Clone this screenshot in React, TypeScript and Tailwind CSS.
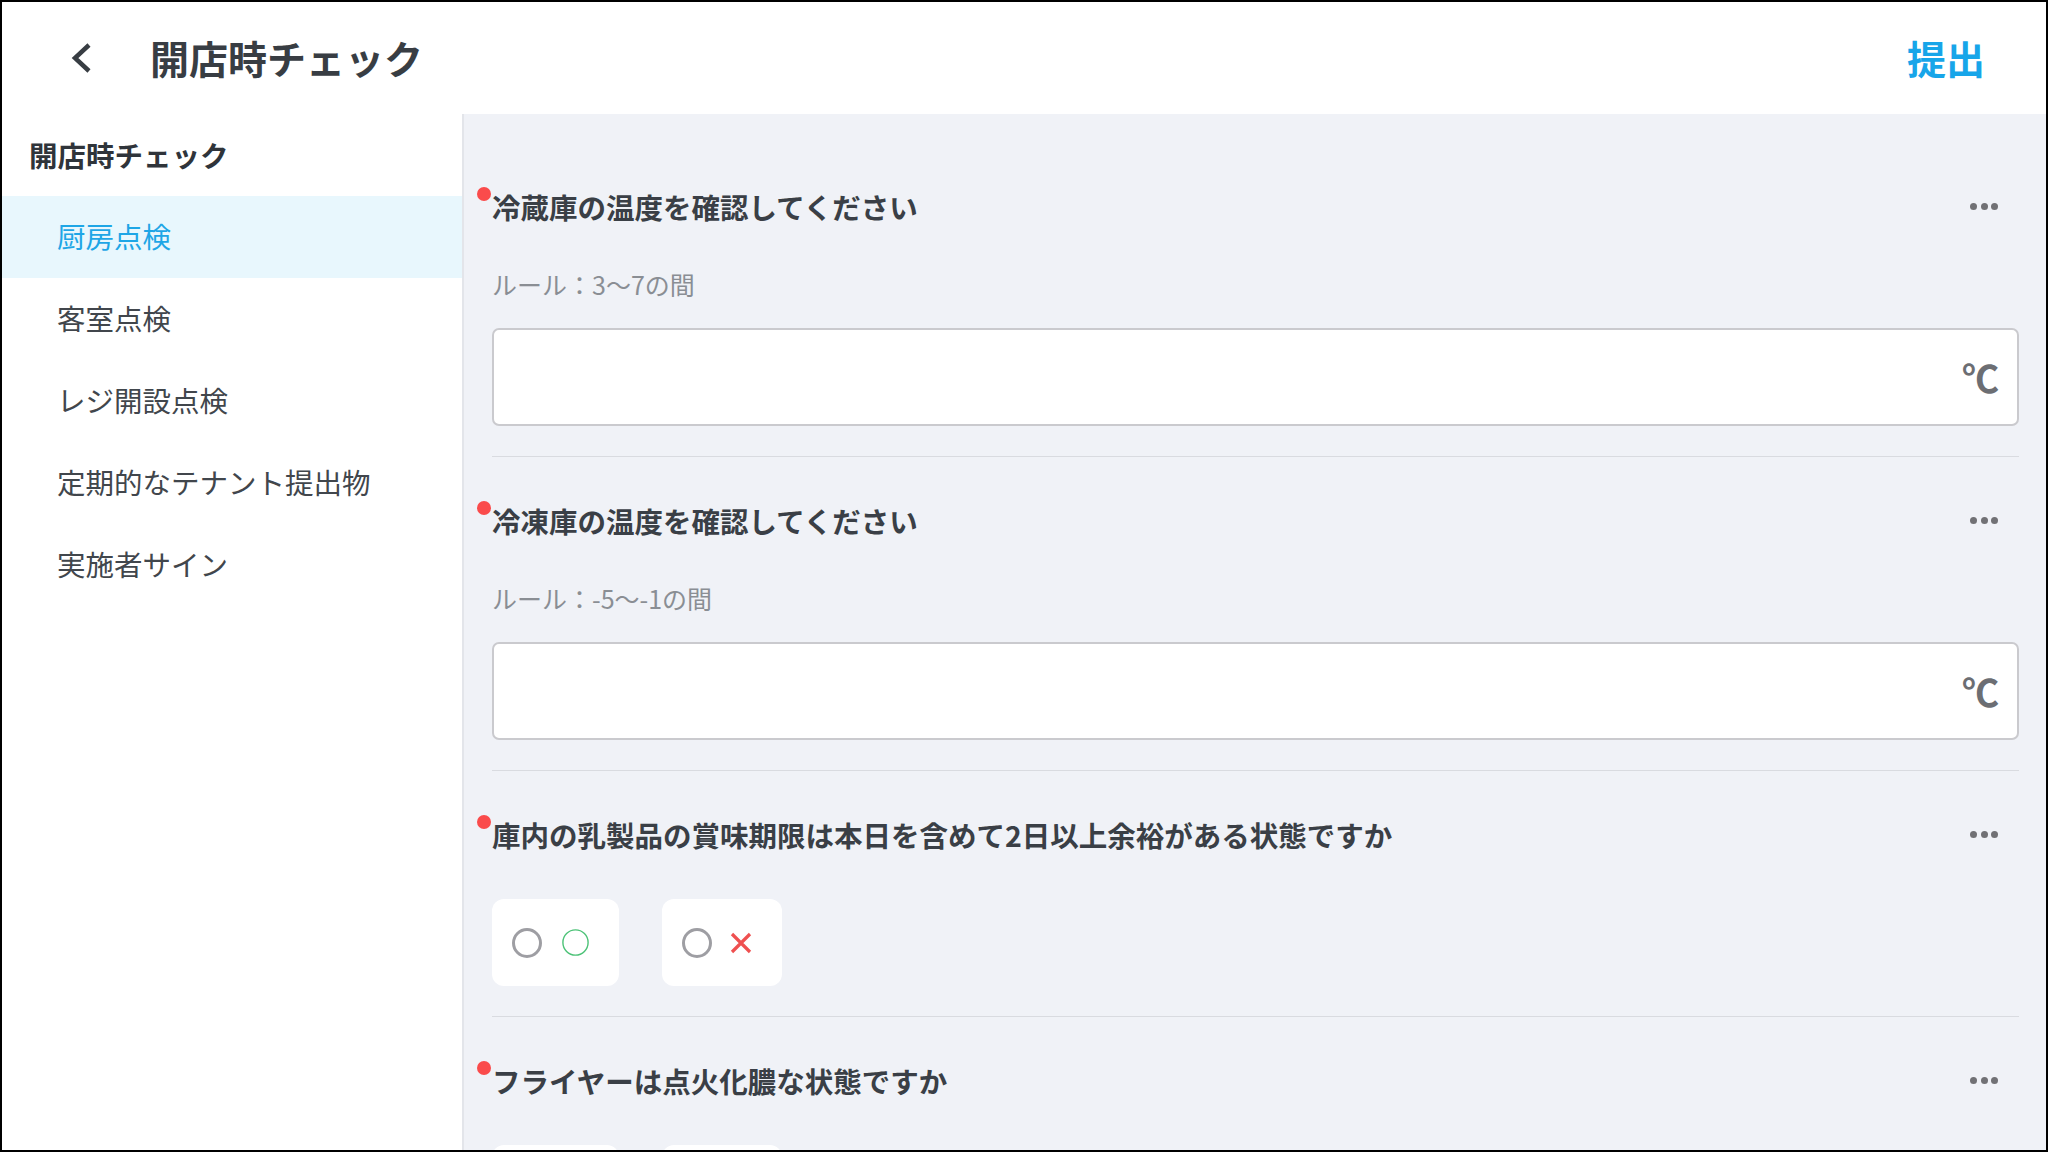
import React from "react";

type Q =
  | { kind: "temp"; title: string; rule: string }
  | { kind: "yesno"; title: string };

const questions: Q[] = [
  { kind: "temp", title: "冷蔵庫の温度を確認してください", rule: "ルール：3〜7の間" },
  { kind: "temp", title: "冷凍庫の温度を確認してください", rule: "ルール：-5〜-1の間" },
  { kind: "yesno", title: "庫内の乳製品の賞味期限は本日を含めて2日以上余裕がある状態ですか" },
  { kind: "yesno", title: "フライヤーは点火化膿な状態ですか" },
];

const navItems = ["厨房点検", "客室点検", "レジ開設点検", "定期的なテナント提出物", "実施者サイン"];

function Dots() {
  return (
    <div className="flex items-center gap-[3.5px] mr-[21px] -mt-[2px]">
      <span className="w-[7px] h-[7px] rounded-full bg-[#717175]" />
      <span className="w-[7px] h-[7px] rounded-full bg-[#717175]" />
      <span className="w-[7px] h-[7px] rounded-full bg-[#717175]" />
    </div>
  );
}

function Radio() {
  return <span className="w-[30px] h-[30px] rounded-full border-[3px] border-[#9e9ea3] shrink-0" />;
}

function YesNo() {
  return (
    <div className="flex gap-[43px] mt-[44px]">
      <div className="h-[87px] bg-white rounded-[12px] flex items-center pl-[20px] pr-[30px] gap-[20px]">
        <Radio />
        <svg width="27" height="27" viewBox="0 0 27 27">
          <circle cx="13.5" cy="13.5" r="12.6" fill="none" stroke="#4cc277" strokeWidth="1.4" />
        </svg>
      </div>
      <div className="h-[87px] bg-white rounded-[12px] flex items-center pl-[20px] pr-[30px] gap-[18px]">
        <Radio />
        <svg width="22" height="22" viewBox="0 0 22 22">
          <path d="M2 2 L20 20 M20 2 L2 20" stroke="#ef5050" strokeWidth="3.2" fill="none" />
        </svg>
      </div>
    </div>
  );
}

function Question({ q }: { q: Q }) {
  return (
    <div className="pt-[44px] pb-[30px] border-b border-[#d9dbe0]">
      <div className="flex items-center justify-between h-[40px]">
        <div className="relative text-[28.5px] leading-[40px] font-bold text-[#3a3f46]">
          <span className="absolute left-[-15px] top-0 w-[14px] h-[14px] rounded-full bg-[#fa4b4b]" />
          {q.title}
        </div>
        <Dots />
      </div>
      {q.kind === "temp" ? (
        <>
          <div className="mt-[41px] text-[25px] leading-[32px] text-[#8a8e94]">{q.rule}</div>
          <div className="mt-[28px] h-[98px] bg-white border-2 border-[#cacace] rounded-[7px] flex items-center justify-end pr-[18px]">
            <span className="text-[37px] font-bold text-[#6c6e73] leading-none">℃</span>
          </div>
        </>
      ) : (
        <YesNo />
      )}
    </div>
  );
}

export default function App() {
  return (
    <div className="w-[2048px] h-[1152px] border-2 border-black bg-white flex flex-col overflow-hidden font-['Noto_Sans_CJK_JP',sans-serif]">
      <header className="h-[112px] shrink-0 flex items-center justify-between bg-white">
        <div className="flex items-center">
          <svg className="ml-[68px]" width="24" height="32" viewBox="0 0 24 32">
            <path d="M19 3 L5 16 L19 29" fill="none" stroke="#383d43" strokeWidth="4.5" strokeLinejoin="miter" />
          </svg>
          <h1 className="ml-[56px] text-[39px] font-bold text-[#383d43] leading-none -mt-[2px]">開店時チェック</h1>
        </div>
        <button className="mr-[61px] text-[39px] font-bold text-[#17a5e9] leading-none -mt-[2px]">提出</button>
      </header>
      <div className="flex flex-1 min-h-0">
        <aside className="w-[462px] shrink-0 bg-white border-r-2 border-[#e3e5ea]">
          <div className="h-[82px] flex items-center pl-[27px] text-[28.5px] font-bold text-[#2f343a]">開店時チェック</div>
          {navItems.map((item, i) => (
            <div
              key={item}
              className={
                i === 0
                  ? "h-[82px] flex items-center pl-[55px] pb-[2px] text-[28.5px] text-[#1ea6e6] bg-[#e8f7fd]"
                  : "h-[82px] flex items-center pl-[55px] pb-[2px] text-[28.5px] text-[#41464c]"
              }
            >
              {item}
            </div>
          ))}
        </aside>
        <main className="flex-1 bg-[#f0f2f7] pl-[28px] pr-[27px] pt-[29px] overflow-hidden">
          {questions.map((q, i) => (
            <Question key={i} q={q} />
          ))}
        </main>
      </div>
    </div>
  );
}
